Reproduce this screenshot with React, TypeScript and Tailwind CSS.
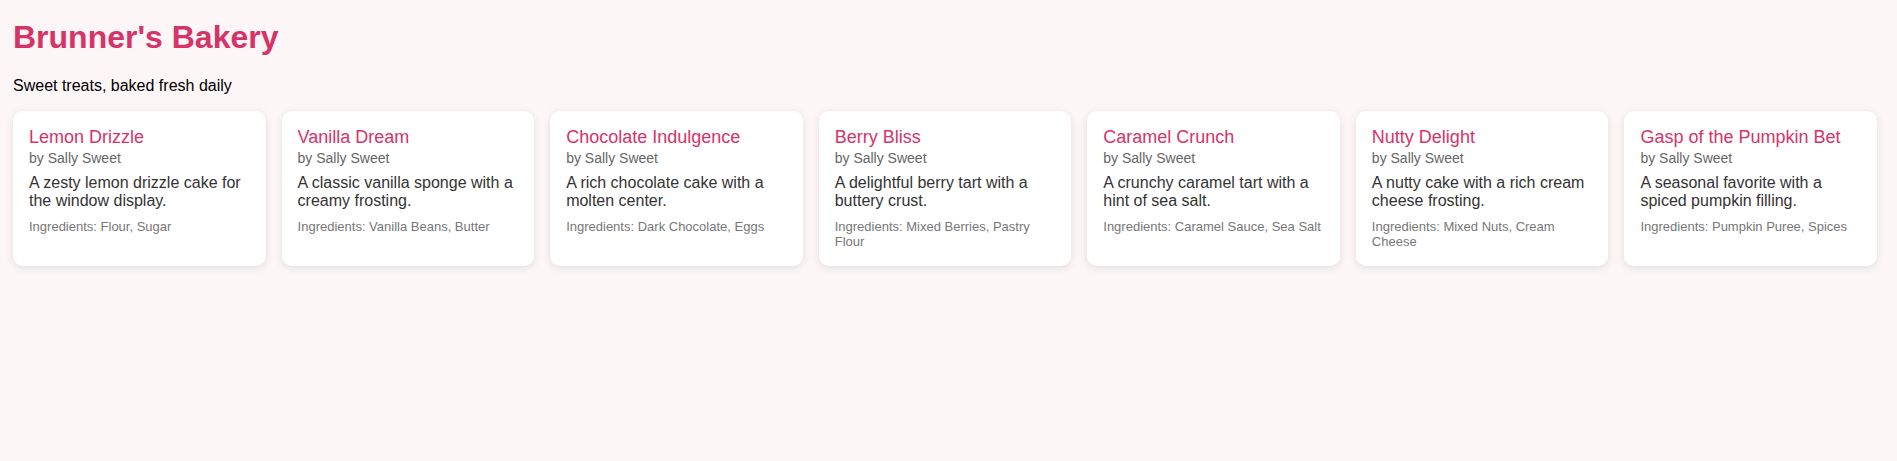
import React from 'react';

type Cake = {
  name: string;
  description: string;
  ingredients: string[];
};

const cakes: Cake[] = [
  { name: 'Lemon Drizzle', description: 'A zesty lemon drizzle cake for the window display.', ingredients: ['Flour', 'Sugar'] },
  { name: 'Vanilla Dream', description: 'A classic vanilla sponge with a creamy frosting.', ingredients: ['Vanilla Beans', 'Butter'] },
  { name: 'Chocolate Indulgence', description: 'A rich chocolate cake with a molten center.', ingredients: ['Dark Chocolate', 'Eggs'] },
  { name: 'Berry Bliss', description: 'A delightful berry tart with a buttery crust.', ingredients: ['Mixed Berries', 'Pastry Flour'] },
  { name: 'Caramel Crunch', description: 'A crunchy caramel tart with a hint of sea salt.', ingredients: ['Caramel Sauce', 'Sea Salt'] },
  { name: 'Nutty Delight', description: 'A nutty cake with a rich cream cheese frosting.', ingredients: ['Mixed Nuts', 'Cream Cheese'] },
  { name: 'Gasp of the Pumpkin Bet', description: 'A seasonal favorite with a spiced pumpkin filling.', ingredients: ['Pumpkin Puree', 'Spices'] },
];

const CakeCard: React.FC<{ cake: Cake }> = ({ cake }) => (
  <div className="bg-white rounded-[10px] shadow-[0_2px_8px_rgba(0,0,0,0.1)] px-4 pt-4 pb-4">
    <h3 className="text-[18px] leading-[1.15] font-normal text-[#d63369]">{cake.name}</h3>
    <p className="mt-[2px] text-[14px] leading-[1.15] text-[#666]">by Sally Sweet</p>
    <p className="mt-2 text-[16px] leading-[1.15] text-[#333]">{cake.description}</p>
    <p className="mt-2 text-[13px] leading-[1.2] text-[#777]">Ingredients: {cake.ingredients.join(', ')}</p>
  </div>
);

export default function App() {
  return (
    <div className="min-h-screen bg-[#fdf6f6] font-['Liberation_Sans',Arial,sans-serif] pl-[13px] pr-[20px] pt-[19px]">
      {/* Header */}
      <h1 className="text-[32px] leading-[1.15] font-bold text-[#d63369]">Brunner's Bakery</h1>
      <p className="mt-[21px] text-[16px] leading-[1.15] text-black">Sweet treats, baked fresh daily</p>

      {/* Cakes */}
      <div className="mt-[16px] grid grid-cols-7 gap-4">
        {cakes.map((cake) => (
          <CakeCard key={cake.name} cake={cake} />
        ))}
      </div>
    </div>
  );
}
